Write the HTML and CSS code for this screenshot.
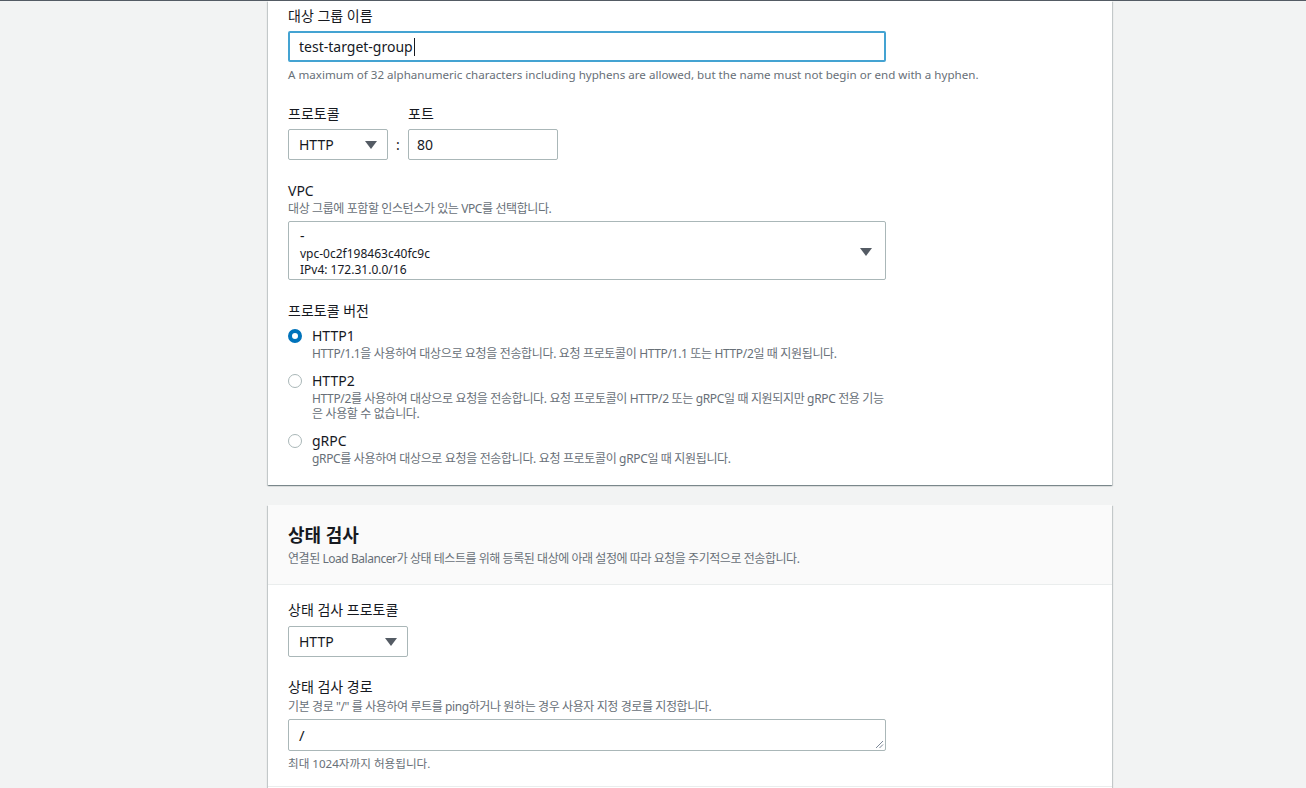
FILE: index.html
```html
<!DOCTYPE html>
<html lang="ko">
<head>
<meta charset="utf-8">
<link rel="stylesheet" href="styles.css">
</head>
<body>
<div class="topline"></div>
<main class="column">
  <section class="card card-first">
    <div class="field">
      <div class="label">대상 그룹 이름</div>
      <div class="input input-focus">test-target-group<span class="cursor"></span></div>
      <div class="hint">A maximum of 32 alphanumeric characters including hyphens are allowed, but the name must not begin or end with a hyphen.</div>
    </div>

    <div class="field proto-row">
      <div class="proto-col">
        <div class="label">프로토콜</div>
        <div class="select sel-proto"><span>HTTP</span><span class="caret"></span></div>
      </div>
      <div class="colon">:</div>
      <div class="port-col">
        <div class="label">포트</div>
        <div class="input port">80</div>
      </div>
    </div>

    <div class="field">
      <div class="label">VPC</div>
      <div class="desc">대상 그룹에 포함할 인스턴스가 있는 VPC를 선택합니다.</div>
      <div class="select vpc">
        <div class="vpc-text">
          <div class="vpc-name">-</div>
          <div class="vpc-sub">vpc-0c2f198463c40fc9c</div>
          <div class="vpc-sub">IPv4: 172.31.0.0/16</div>
        </div>
        <span class="caret"></span>
      </div>
    </div>

    <div class="field">
      <div class="label">프로토콜 버전</div>
      <div class="radios">
        <div class="radio-row">
          <span class="radio checked"></span>
          <div class="radio-body">
            <div class="radio-title">HTTP1</div>
            <div class="radio-desc">HTTP/1.1을 사용하여 대상으로 요청을 전송합니다. 요청 프로토콜이 HTTP/1.1 또는 HTTP/2일 때 지원됩니다.</div>
          </div>
        </div>
        <div class="radio-row">
          <span class="radio"></span>
          <div class="radio-body">
            <div class="radio-title">HTTP2</div>
            <div class="radio-desc">HTTP/2를 사용하여 대상으로 요청을 전송합니다. 요청 프로토콜이 HTTP/2 또는 gRPC일 때 지원되지만 gRPC 전용 기능<br>은 사용할 수 없습니다.</div>
          </div>
        </div>
        <div class="radio-row">
          <span class="radio"></span>
          <div class="radio-body">
            <div class="radio-title">gRPC</div>
            <div class="radio-desc">gRPC를 사용하여 대상으로 요청을 전송합니다. 요청 프로토콜이 gRPC일 때 지원됩니다.</div>
          </div>
        </div>
      </div>
    </div>
  </section>

  <section class="card card-second">
    <header class="card-header">
      <h2>상태 검사</h2>
      <div class="desc">연결된 Load Balancer가 상태 테스트를 위해 등록된 대상에 아래 설정에 따라 요청을 주기적으로 전송합니다.</div>
    </header>
    <div class="card-body">
      <div class="field">
        <div class="label">상태 검사 프로토콜</div>
        <div class="select sel-hc"><span>HTTP</span><span class="caret"></span></div>
      </div>
      <div class="field field-last">
        <div class="label">상태 검사 경로</div>
        <div class="desc desc-path">기본 경로 "/" 를 사용하여 루트를 ping하거나 원하는 경우 사용자 지정 경로를 지정합니다.</div>
        <div class="input textarea">/<svg class="grip" width="9" height="9" viewBox="0 0 9 9"><path d="M8 1 L1 8 M8 4.5 L4.5 8" stroke="#7d8998" stroke-width="1" fill="none"/></svg></div>
        <div class="hint">최대 1024자까지 허용됩니다.</div>
      </div>
    </div>
    <div class="card-divider"></div>
    <div class="card-rest"></div>
  </section>
</main>
</body>
</html>
```

FILE: styles.css
```css
html, body {
  margin: 0;
  padding: 0;
}
body {
  background: #f2f3f3;
  font-family: "Noto Sans", "Noto Sans CJK KR", sans-serif;
  color: #16191f;
  height: 788px;
  overflow: hidden;
}
.topline {
  height: 1px;
  background: #545b64;
}
.column {
  margin-left: 268px;
  width: 844px;
}
.card {
  background: #fff;
  box-shadow: 0 1px 1px 0 rgba(0, 28, 36, 0.3), 1px 1px 1px 0 rgba(0, 28, 36, 0.15), -1px 1px 1px 0 rgba(0, 28, 36, 0.15);
}
.card-first {
  padding: 5px 20px 20px 20px;
  box-sizing: border-box;
  height: 484px;
}
.card-first .field {
  margin-bottom: 21px;
}
.card-second {
  margin-top: 20px;
}
.card-header {
  background: #fafafa;
  border-bottom: 1px solid #eaeded;
  padding: 18px 20px 17px 20px;
}
.card-header h2 {
  margin: 0;
  font-size: 18px;
  font-weight: 700;
  line-height: 24px;
}
.card-body {
  padding: 15px 20px 0 20px;
}
.card-divider {
  border-top: 1px solid #eaeded;
}
.card-rest {
  height: 40px;
}
.field {
  margin-bottom: 20px;
}
.card-body .field-last {
  margin-bottom: 0;
  padding-bottom: 14px;
}
.label {
  font-size: 14px;
  line-height: 20px;
  margin-bottom: 5px;
}
.card-body .label {
  margin-bottom: 6px;
}
.desc {
  font-size: 12px;
  line-height: 16px;
  color: #687078;
  margin-top: -5px;
  margin-bottom: 4px;
  letter-spacing: -0.4px;
}
.desc-path {
  margin-top: -4px;
}
.card-header .desc {
  margin: 4px 0 0 0;
  letter-spacing: -0.45px;
}
.hint {
  font-size: 11.6px;
  line-height: 16px;
  color: #687078;
  margin-top: 5px;
}
.input {
  box-sizing: border-box;
  height: 31px;
  border: 1px solid #aab7b8;
  border-radius: 2px;
  padding: 0 10px;
  font-size: 14px;
  line-height: 29px;
  display: flex;
  align-items: center;
}
.input-focus {
  width: 598px;
  border: 2px solid #44a3d2;
  padding: 0 9px;
}
.cursor {
  display: inline-block;
  width: 1px;
  height: 18px;
  background: #16191f;
  margin-left: 1px;
}
.proto-row {
  display: flex;
  align-items: flex-end;
}
.colon {
  width: 20px;
  text-align: center;
  font-size: 14px;
  line-height: 31px;
}
.port {
  width: 150px;
  padding: 0 8px;
}
.select {
  box-sizing: border-box;
  border: 1px solid #aab7b8;
  border-radius: 2px;
  display: flex;
  align-items: center;
  justify-content: space-between;
  padding: 0 8px 0 10px;
  font-size: 14px;
}
.sel-proto {
  width: 100px;
  height: 31px;
}
.sel-hc {
  width: 120px;
  height: 31px;
}
.caret {
  width: 0;
  height: 0;
  border-left: 6px solid transparent;
  border-right: 6px solid transparent;
  border-top: 8px solid #545b64;
  margin-right: 2px;
}
.vpc {
  width: 598px;
  height: 59px;
  padding: 6px 11px 4px 11px;
}
.vpc-name {
  font-size: 14px;
  line-height: 20px;
}
.vpc-sub {
  font-size: 12px;
  line-height: 16px;
  color: #16191f;
}
.radios {
  display: flex;
  flex-direction: column;
  gap: 10px;
  margin-top: 2px;
}
.radio-row {
  display: flex;
  align-items: flex-start;
}
.radio {
  box-sizing: border-box;
  width: 14px;
  height: 14px;
  border-radius: 50%;
  border: 1.5px solid #aab7b8;
  margin-top: 3px;
  margin-right: 10px;
  flex: none;
}
.radio.checked {
  border: 4px solid #0073bb;
  background: #fff;
}
.radio-title {
  font-size: 14px;
  line-height: 20px;
}
.radio-desc {
  font-size: 12px;
  line-height: 15px;
  color: #687078;
  letter-spacing: -0.35px;
}
.textarea {
  width: 598px;
  height: 32px;
  position: relative;
  font-size: 15px;
}
.grip {
  position: absolute;
  right: 1px;
  bottom: 1px;
}
```
